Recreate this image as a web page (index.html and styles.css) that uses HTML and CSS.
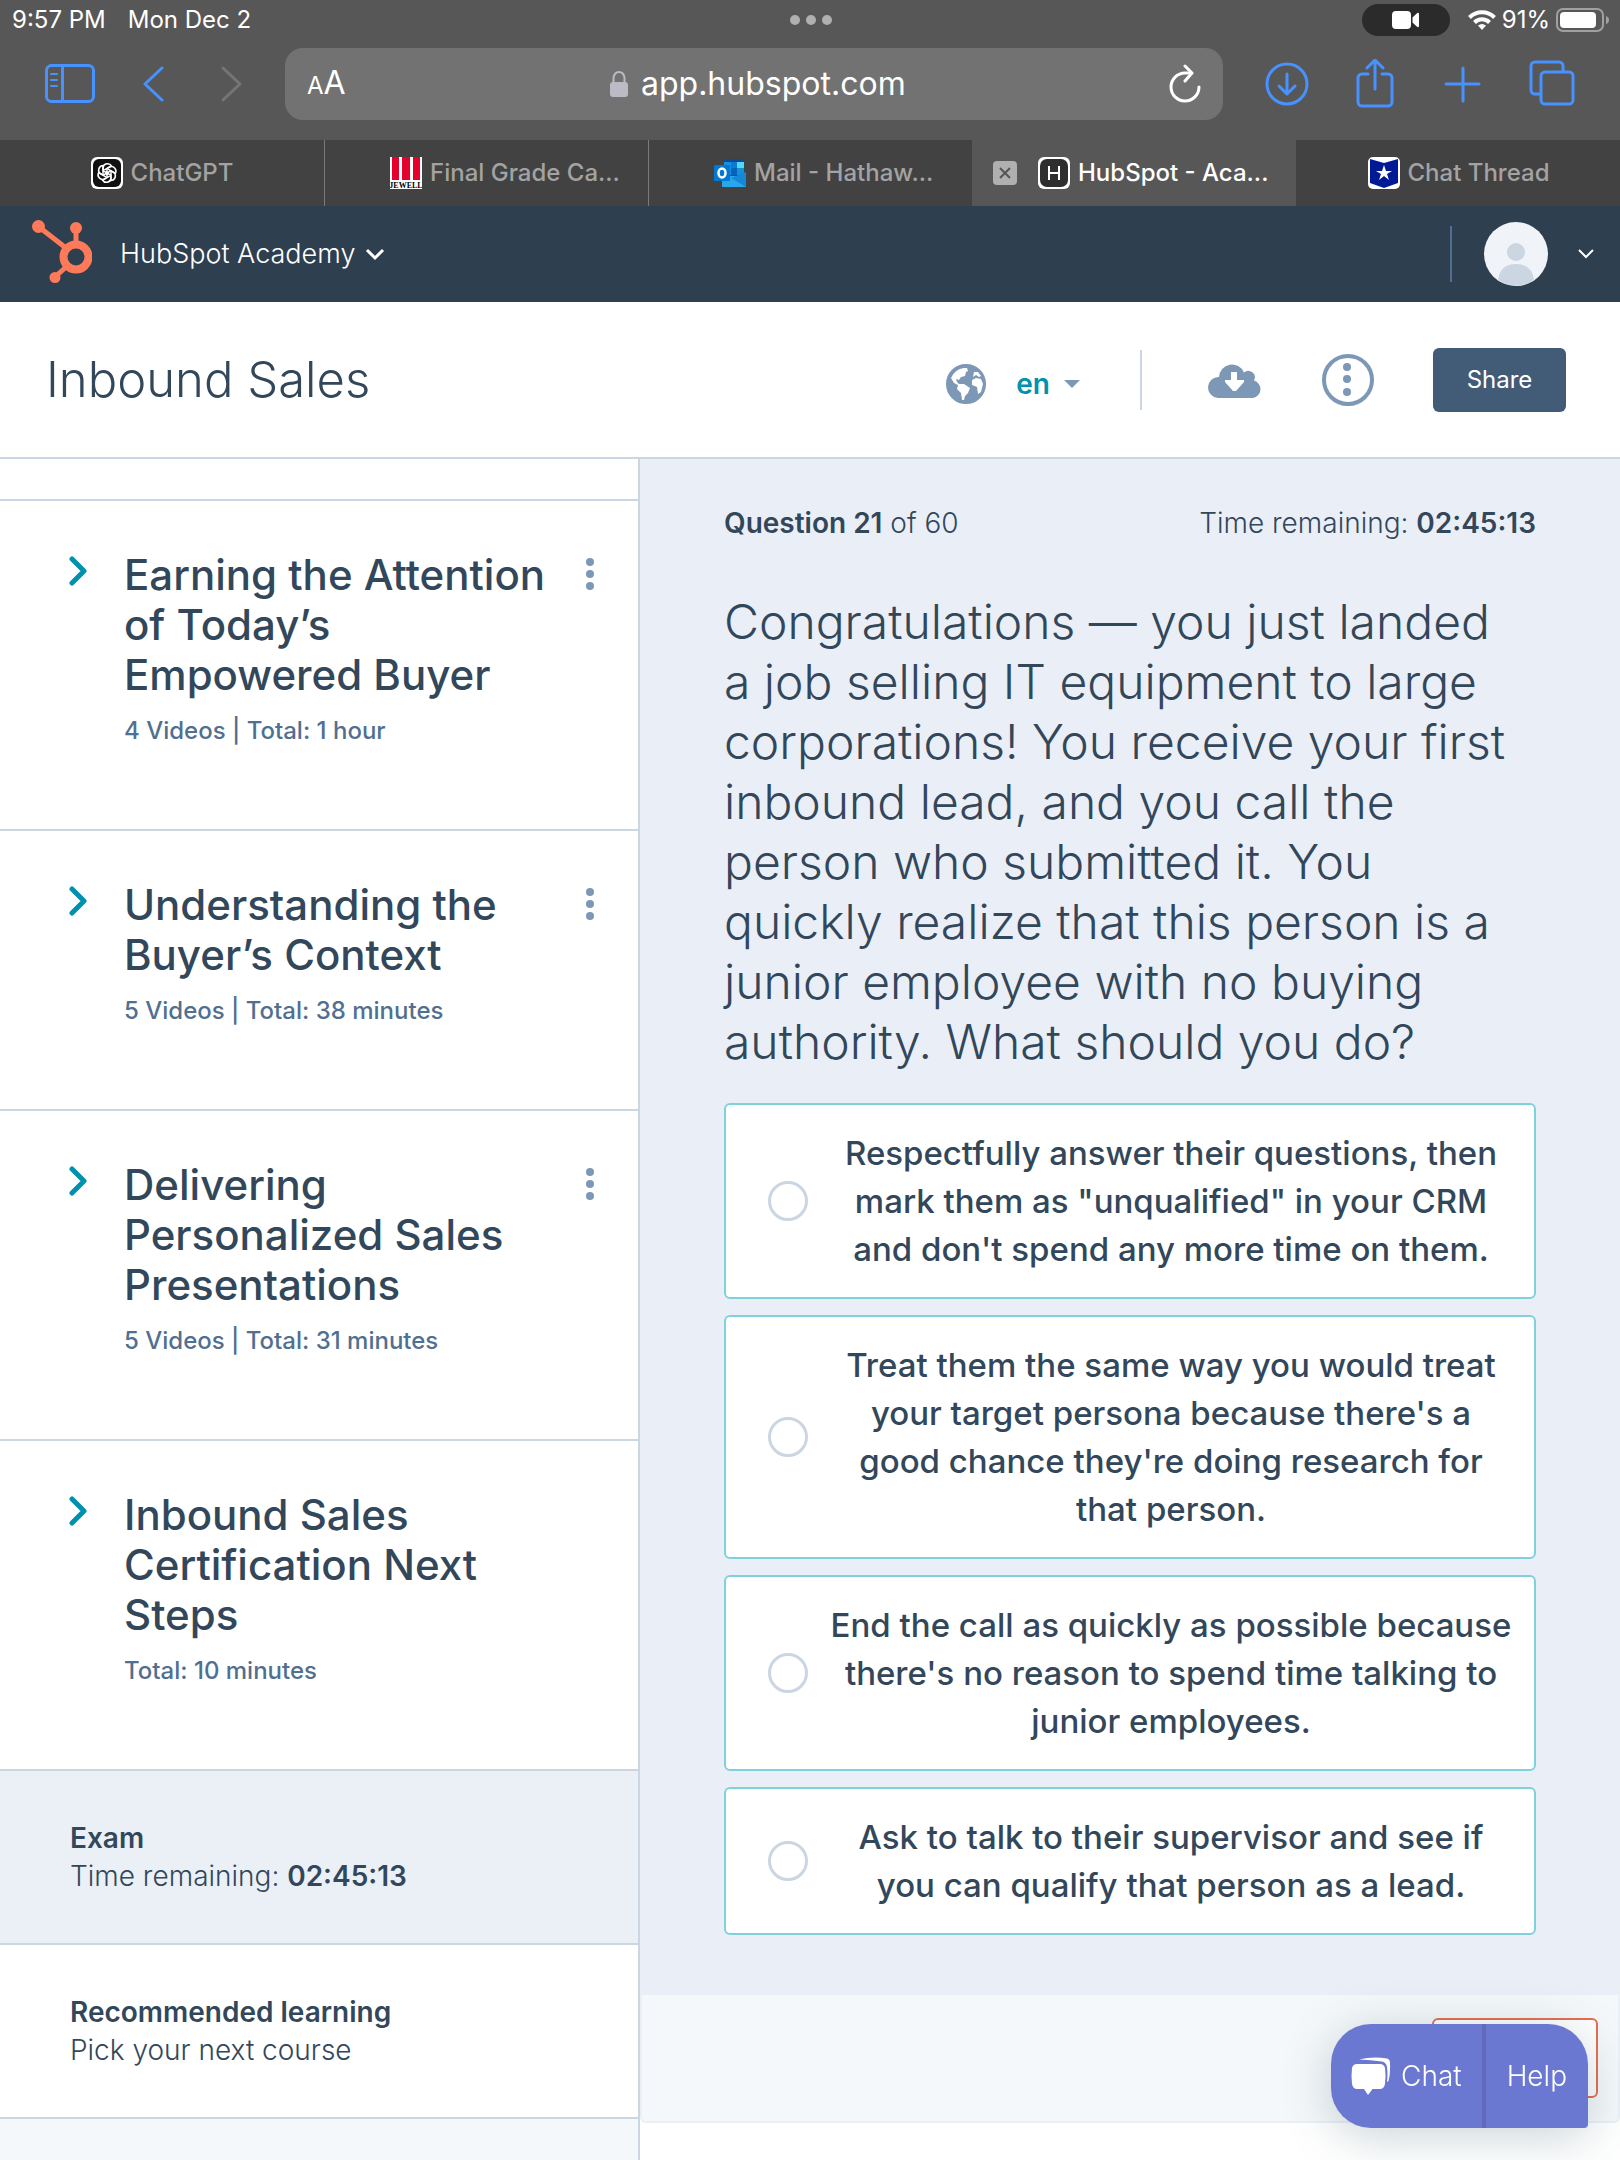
FILE: index.html
```html
<!DOCTYPE html>
<html lang="en">
<head>
    <meta charset="UTF-8">
    <meta name="viewport" content="width=device-width, initial-scale=1.0">
    <title>HubSpot - Academy</title>
    <link rel="stylesheet" href="styles.css">
</head>
<body>
    <!-- Browser chrome -->
    <div class="browser">
        <div class="status-bar">
            <div class="status-left">
                <span>9:57 PM</span>
                <span>Mon Dec 2</span>
            </div>
            <div class="status-dots"><i></i><i></i><i></i></div>
            <div class="status-right">
                <div class="camera-pill">
                    <svg width="28" height="18" viewBox="0 0 28 18" fill="#fff"><rect width="19" height="18" rx="4"/><path d="M20.500 6.500 L25 2.200 Q27 1 27 3.200 V14.800 Q27 17 25 15.800 L20.500 11.500 Z"/></svg>
                </div>
                <svg width="28" height="20" viewBox="0 0 28 20" fill="none" stroke="#fff" stroke-width="4"><path d="M1.500 7.500 A17.500 17.500 0 0 1 26.500 7.500"/><path d="M6.500 12.500 A10.500 10.500 0 0 1 21.500 12.500"/><path d="M14 20 L10 15.600 Q14 12.500 18 15.600 Z" fill="#fff" stroke="none"/></svg>
                <span class="battery-text">91%</span>
                <svg width="54" height="24" viewBox="0 0 54 24"><rect x="1" y="1" width="46" height="22" rx="6" fill="none" stroke="#a0a0a0" stroke-width="2"/><rect x="4" y="4" width="36" height="16" rx="4" fill="#fff"/><path d="M50 8 Q53 9 53 12 Q53 15 50 16 Z" fill="#a0a0a0"/></svg>
            </div>
        </div>

        <div class="toolbar">
            <div class="toolbar-nav">
                <button type="button" aria-label="Sidebar">
                    <svg width="50" height="40" viewBox="0 0 50 40" fill="none" stroke="#4792ff" stroke-width="3"><rect x="1.500" y="1.500" width="47" height="36" rx="5"/><path d="M17.500 2v36"/><path d="M6 10h6M6 16h6M6 22h6" stroke-width="2" stroke-linecap="round"/></svg>
                </button>
                <button type="button" aria-label="Back">
                    <svg width="28" height="40" viewBox="0 0 28 40" fill="none" stroke="#4792ff" stroke-width="3" stroke-linecap="round" stroke-linejoin="round"><path d="M19 4L2 20l17 16"/></svg>
                </button>
                <button type="button" aria-label="Forward">
                    <svg width="28" height="40" viewBox="0 0 28 40" fill="none" stroke="#757575" stroke-width="3" stroke-linecap="round" stroke-linejoin="round"><path d="M4 4l17 16L4 36"/></svg>
                </button>
            </div>
            <div class="address-bar">
                <button type="button" class="text-size"><small>A</small>A</button>
                <div class="address">
                    <svg width="20" height="28" viewBox="0 0 20 28"><rect x="1" y="12" width="18" height="15" rx="3" fill="#bcbac4"/><path d="M4.500 13V8a5.500 6 0 0 1 11 0v5" fill="none" stroke="#bcbac4" stroke-width="2"/></svg>
                    <span>app.hubspot.com</span>
                </div>
                <button type="button" aria-label="Reload">
                    <svg width="32" height="40" viewBox="0 0 32 40" fill="none" stroke="#fff" stroke-width="3" stroke-linecap="round" stroke-linejoin="round"><path d="M30 23a14 14 0 1 1-14-14h6"/><path d="M16 2l7 7-7 8"/></svg>
                </button>
            </div>
            <div class="toolbar-actions">
                <button type="button" aria-label="Downloads">
                    <svg width="44" height="50" viewBox="0 0 44 50" fill="none" stroke="#4792ff" stroke-width="3" stroke-linecap="round" stroke-linejoin="round"><circle cx="22" cy="25" r="20"/><path d="M22 15v20M14 27l8 8 8-8"/></svg>
                </button>
                <button type="button" aria-label="Share page">
                    <svg width="44" height="50" viewBox="0 0 44 50" fill="none" stroke="#4792ff" stroke-width="3" stroke-linecap="round" stroke-linejoin="round"><path d="M15 15H9a4 4 0 0 0-4 4v24a4 4 0 0 0 4 4h26a4 4 0 0 0 4-4V19a4 4 0 0 0-4-4h-6"/><path d="M22 30V2M14 9l8-8 8 8"/></svg>
                </button>
                <button type="button" aria-label="New tab">
                    <svg width="44" height="50" viewBox="0 0 44 50" fill="none" stroke="#4792ff" stroke-width="3" stroke-linecap="round"><path d="M22 9v33M5 25h33"/></svg>
                </button>
                <button type="button" aria-label="Show tabs">
                    <svg width="46" height="50" viewBox="0 0 46 50" fill="none" stroke="#4792ff" stroke-width="3"><rect x="12" y="13" width="32" height="32" rx="4"/><path d="M12 35H6a4 4 0 0 1-4-4V7a4 4 0 0 1 4-4h24a4 4 0 0 1 4 4v6"/></svg>
                </button>
            </div>
        </div>

        <div class="tabs">
            <div class="tab">
                <svg width="32" height="32" viewBox="0 0 32 32"><rect width="32" height="32" rx="6" fill="#fff"/><rect x="2" y="2" width="28" height="28" rx="6" fill="#111"/><g fill="none" stroke="#fff" stroke-width="1.500" transform="translate(16 16)"><path id="petal" d="M-4 1V-5.500A4.600 4.600 0 0 1 4.500-7L0-4.400V2"/><use href="#petal" transform="rotate(60)"/><use href="#petal" transform="rotate(120)"/><use href="#petal" transform="rotate(180)"/><use href="#petal" transform="rotate(240)"/><use href="#petal" transform="rotate(300)"/></g></svg>
                <span>ChatGPT</span>
            </div>
            <div class="tab tab-long">
                <svg width="32" height="32" viewBox="0 0 32 32"><rect width="32" height="32" fill="#fff"/><path d="M2 0h7v23H2zM12 0h8v23h-8zM23 0h7v23h-7z" fill="#e4002b"/><text x="16" y="31" text-anchor="middle" class="jewell">JEWELL</text></svg>
                <span>Final Grade Ca...</span>
            </div>
            <div class="tab tab-long">
                <svg width="32" height="32" viewBox="0 0 32 32"><path d="M10 2h20v16H10z" fill="#1490df"/><path d="M10 2h20v3H10z" fill="#0a4a9a"/><path d="M17 5h6v6h-6z" fill="#0f78d4"/><path d="M23 5h7v6h-7z" fill="#50d9ff"/><path d="M17 11h6v7h-6z" fill="#0364b8"/><path d="M8 19h24v11H8z" fill="#28a8ea"/><path d="M32 15v15L17 21z" fill="#1587d4"/><path d="M8 22l24 8H8z" fill="#28a8ea"/><rect y="8" width="16" height="16" rx="1" fill="#0078d4"/><ellipse cx="8" cy="16" rx="3.500" ry="4.500" fill="none" stroke="#fff" stroke-width="2.500"/></svg>
                <span>Mail - Hathaw...</span>
            </div>
            <div class="tab tab-long active">
                <button type="button" class="tab-close" aria-label="Close tab">
                    <svg width="24" height="24" viewBox="0 0 24 24"><rect width="24" height="24" rx="4" fill="#b0b0b0"/><path d="M7 7l10 10M17 7L7 17" stroke="#555" stroke-width="2"/></svg>
                </button>
                <svg width="32" height="32" viewBox="0 0 32 32"><rect width="32" height="32" rx="6" fill="#fff"/><rect x="2" y="2" width="28" height="28" rx="7" fill="#2e2e2e"/><path d="M11 9v14M21 9v14M11 16h10" stroke="#fff" stroke-width="2"/></svg>
                <span>HubSpot - Aca...</span>
            </div>
            <div class="tab">
                <svg width="32" height="32" viewBox="0 0 32 32"><rect width="32" height="32" rx="5" fill="#fff"/><path d="M2 2l14 4 14-4v24l-14 5-14-5z" fill="#001a96"/><path d="M16 8l2 6h6l-5 3 2 6-5-4-5 4 2-6-5-3h6z" fill="#fff"/></svg>
                <span>Chat Thread</span>
            </div>
        </div>
    </div>

    <!-- HubSpot top nav -->
    <nav class="navbar">
        <a href="#" class="navbar-logo" aria-label="HubSpot">
            <svg width="60" height="64" viewBox="0 0 60 64" fill="none" stroke="#ff7a59"><circle cx="44" cy="37" r="12.500" stroke-width="8"/><path d="M44 26V9M34 28L7 7M34 47L23 57" stroke-width="5"/><g fill="#ff7a59" stroke="none"><circle cx="6.500" cy="6.500" r="6.500"/><circle cx="44" cy="8" r="6"/><circle cx="23" cy="57.500" r="5.500"/></g></svg>
        </a>
        <button type="button" class="navbar-menu">HubSpot Academy
            <svg width="20" height="14" viewBox="0 0 20 14" fill="none" stroke="#fff" stroke-width="3"><path d="M2 3l8 8 8-8"/></svg>
        </button>
        <button type="button" class="account" aria-label="Account">
            <svg class="avatar" width="64" height="64" viewBox="0 0 64 64"><circle cx="32" cy="32" r="32" fill="#f0f4f8"/><circle cx="32" cy="30" r="9" fill="#cbd6e2"/><path d="M14 58Q16 42 32 42T50 58A32 32 0 0 1 14 58z" fill="#cbd6e2"/></svg>
            <svg width="16" height="10" viewBox="0 0 16 10" fill="none" stroke="#fff" stroke-width="2"><path d="M1 1l7 7 7-7"/></svg>
        </button>
    </nav>

    <header class="course-header">
        <h1>Inbound Sales</h1>
        <div class="course-tools">
            <button type="button" class="language">
                <svg width="40" height="40" viewBox="0 0 40 40"><circle cx="20" cy="20" r="19" fill="#7c98b6" stroke="#7c98b6" stroke-width="2"/><path d="M5 14Q9 5 18 4L21 4 22 7 20 8 19 12 15 13 13 16 10 15 11 18 13 20 18 20 24 24 22 29 19 32 18 36 16 36 15 29 11 25 12 21 8 19zM28 8L32 8 35 12 33 13 30 11 27 13zM26 16L30 14 35 15 37 20 35 28 32 30 31 23 26 21z" fill="#fff"/></svg>
                <span>en</span>
                <svg width="16" height="8" viewBox="0 0 16 8"><path d="M0 0h16L8 8z" fill="#7c98b6"/></svg>
            </button>
            <div class="tool-icons">
                <button type="button" aria-label="Download">
                    <svg width="56" height="38" viewBox="0 0 56 38"><path d="M11 37A10.500 10.500 0 0 1 12 16A13 13 0 0 1 37 11.500A6.500 6.500 0 0 1 47 19.500A9 9 0 0 1 46 37z" fill="#7c98b6"/><path d="M24 11h6v8h7v2l-8 9h-3l-8-9v-2h6z" fill="#fff"/></svg>
                </button>
                <button type="button" aria-label="More options">
                    <svg width="52" height="52" viewBox="0 0 52 52" fill="#7c98b6"><circle cx="26" cy="26" r="24" fill="none" stroke="#7c98b6" stroke-width="4"/><circle cx="25" cy="13" r="4"/><circle cx="25" cy="25" r="4"/><circle cx="25" cy="38" r="4"/></svg>
                </button>
                <button type="button" class="share-btn">Share</button>
            </div>
        </div>
    </header>

    <div class="layout">
        <aside class="sidebar">
            <div class="sidebar-gap"></div>
            <section class="lesson">
                <button type="button" class="expand" aria-label="Expand lesson">
                    <svg width="18" height="32" viewBox="0 0 18 32" fill="none" stroke="#0091ae" stroke-width="5" stroke-linecap="round" stroke-linejoin="round"><path d="M3 4l12 12L3 28"/></svg>
                </button>
                <div class="lesson-text">
                    <h2>Earning the Attention of Today’s Empowered Buyer</h2>
                    <p>4 Videos | Total: 1 hour</p>
                </div>
                <button type="button" class="more" aria-label="Lesson options">
                    <svg width="10" height="34" viewBox="0 0 10 34" fill="#7c98b6"><circle cx="5" cy="5" r="4"/><circle cx="5" cy="17" r="4"/><circle cx="5" cy="29" r="4"/></svg>
                </button>
            </section>
            <section class="lesson">
                <button type="button" class="expand" aria-label="Expand lesson">
                    <svg width="18" height="32" viewBox="0 0 18 32" fill="none" stroke="#0091ae" stroke-width="5" stroke-linecap="round" stroke-linejoin="round"><path d="M3 4l12 12L3 28"/></svg>
                </button>
                <div class="lesson-text">
                    <h2>Understanding the Buyer’s Context</h2>
                    <p>5 Videos | Total: 38 minutes</p>
                </div>
                <button type="button" class="more" aria-label="Lesson options">
                    <svg width="10" height="34" viewBox="0 0 10 34" fill="#7c98b6"><circle cx="5" cy="5" r="4"/><circle cx="5" cy="17" r="4"/><circle cx="5" cy="29" r="4"/></svg>
                </button>
            </section>
            <section class="lesson">
                <button type="button" class="expand" aria-label="Expand lesson">
                    <svg width="18" height="32" viewBox="0 0 18 32" fill="none" stroke="#0091ae" stroke-width="5" stroke-linecap="round" stroke-linejoin="round"><path d="M3 4l12 12L3 28"/></svg>
                </button>
                <div class="lesson-text">
                    <h2>Delivering Personalized Sales Presentations</h2>
                    <p>5 Videos | Total: 31 minutes</p>
                </div>
                <button type="button" class="more" aria-label="Lesson options">
                    <svg width="10" height="34" viewBox="0 0 10 34" fill="#7c98b6"><circle cx="5" cy="5" r="4"/><circle cx="5" cy="17" r="4"/><circle cx="5" cy="29" r="4"/></svg>
                </button>
            </section>
            <section class="lesson">
                <button type="button" class="expand" aria-label="Expand lesson">
                    <svg width="18" height="32" viewBox="0 0 18 32" fill="none" stroke="#0091ae" stroke-width="5" stroke-linecap="round" stroke-linejoin="round"><path d="M3 4l12 12L3 28"/></svg>
                </button>
                <div class="lesson-text">
                    <h2>Inbound Sales Certification Next Steps</h2>
                    <p>Total: 10 minutes</p>
                </div>
            </section>
            <a href="#" class="side-item selected">
                <strong>Exam</strong>
                <span>Time remaining: <b>02:45:13</b></span>
            </a>
            <a href="#" class="side-item">
                <strong>Recommended learning</strong>
                <span>Pick your next course</span>
            </a>
        </aside>

        <main class="exam">
            <form class="question">
                <div class="question-info">
                    <span><strong>Question 21</strong> of 60</span>
                    <span>Time remaining: <b>02:45:13</b></span>
                </div>
                <h2 id="question-text">Congratulations — you just landed a job selling IT equipment to large corporations! You receive your first inbound lead, and you call the person who submitted it. You quickly realize that this person is a junior employee with no buying authority. What should you do?</h2>
                <div class="options" role="radiogroup" aria-labelledby="question-text">
                    <label class="option">
                        <input type="radio" name="answer" value="1">
                        <span>Respectfully answer their questions, then mark them as "unqualified" in your CRM and don't spend any more time on them.</span>
                    </label>
                    <label class="option">
                        <input type="radio" name="answer" value="2">
                        <span>Treat them the same way you would treat your target persona because there's a good chance they're doing research for that person.</span>
                    </label>
                    <label class="option">
                        <input type="radio" name="answer" value="3">
                        <span>End the call as quickly as possible because there's no reason to spend time talking to junior employees.</span>
                    </label>
                    <label class="option">
                        <input type="radio" name="answer" value="4">
                        <span>Ask to talk to their supervisor and see if you can qualify that person as a lead.</span>
                    </label>
                </div>
            </form>
            <div class="exam-footer">
                <button type="button" class="next-btn" aria-label="Next"></button>
            </div>
        </main>
    </div>

    <!-- Floating chat / help widget -->
    <div class="help-widget">
        <button type="button" class="chat-btn">
            <svg width="40" height="38" viewBox="0 0 40 38" fill="#fff"><path d="M6 7H29Q33 7 34 11Q35 18 34 27Q33 32 29 32H21.500L17 38L13 32H6Q2 32 1 27Q0 19 1 11Q2 7 6 7z"/><path d="M8 2.500Q22-1 36 1.500Q39 2 39 6Q39.500 17 37.500 24L36 25Q37 17 36 10Q35 5 31 4.500Q20 3 8 2.500z"/></svg>
            Chat
        </button>
        <button type="button" class="help-btn">Help</button>
    </div>
</body>
</html>
```
FILE: styles.css
```css
* {
    margin: 0;
    padding: 0;
    box-sizing: border-box;
}

body {
    font-family: Inter, "Open Sans", sans-serif;
    font-size: 28px;
    font-weight: 300;
    line-height: 38px;
    color: #33475b;
    background-color: #fff;
    min-height: 100vh;
    display: flex;
    flex-direction: column;
}

button {
    font: inherit;
    color: inherit;
    background: none;
    border: none;
    cursor: pointer;
}

svg {
    display: block;
    flex-shrink: 0;
}

a {
    color: inherit;
    text-decoration: none;
}

strong,
b {
    font-weight: 600;
}

/* Browser chrome */
.browser {
    background-color: #575757;
    color: #fff;
    font-weight: 400;
}

.status-bar {
    height: 40px;
    padding: 0 10px 0 12px;
    display: grid;
    grid-template-columns: 1fr auto 1fr;
    align-items: center;
    font-size: 24px;
}

.status-left {
    display: flex;
    gap: 22px;
}

.status-dots {
    display: flex;
    gap: 6px;
}

.status-dots i {
    width: 10px;
    height: 10px;
    border-radius: 50%;
    background-color: #b0b0b0;
}

.status-right {
    display: flex;
    align-items: center;
    justify-content: flex-end;
    gap: 6px;
}

.camera-pill {
    width: 88px;
    height: 32px;
    margin-right: 12px;
    border-radius: 16px;
    background-color: #2b2b2b;
    display: flex;
    align-items: center;
    justify-content: center;
}

.toolbar {
    height: 100px;
    padding: 8px 45px 20px;
    display: flex;
    align-items: center;
}

.toolbar-nav {
    display: flex;
    gap: 48px;
    margin-right: 38px;
}

.toolbar-actions {
    display: flex;
    gap: 44px;
    margin-left: 42px;
}

.address-bar {
    flex: 1;
    height: 72px;
    padding: 0 22px;
    border-radius: 18px;
    background-color: #727272;
    display: flex;
    align-items: center;
    justify-content: space-between;
}

.text-size {
    font-size: 32px;
}

.text-size small {
    font-size: 24px;
}

.address {
    display: flex;
    align-items: center;
    gap: 12px;
    font-size: 32px;
}

.tabs {
    height: 66px;
    display: grid;
    grid-template-columns: repeat(5, 1fr);
    background-color: #424242;
    color: #a3a3a3;
    font-size: 24px;
    font-weight: 500;
}

.tab {
    display: flex;
    align-items: center;
    justify-content: center;
    gap: 8px;
    white-space: nowrap;
    position: relative;
}

.tab + .tab {
    border-left: 1px solid #7a7a7a;
}

.tab-long {
    justify-content: flex-start;
    padding-left: 65px;
}

.tab.active,
.tab.active + .tab {
    border-left-color: transparent;
}

.tab.active {
    background-color: #575757;
    color: #fff;
}

.tab-close {
    position: absolute;
    left: 20px;
}

.jewell {
    font-family: "Liberation Serif", serif;
    font-size: 8px;
    font-weight: 700;
}

/* HubSpot nav */
.navbar {
    height: 96px;
    padding: 0 26px 0 32px;
    display: flex;
    align-items: center;
    background-color: #2e3f50;
    color: #fff;
}

.navbar-logo {
    padding-bottom: 4px;
}

.navbar-menu {
    display: flex;
    align-items: center;
    gap: 10px;
    margin-left: 28px;
    font-size: 27px;
}

.account {
    display: flex;
    align-items: center;
    gap: 30px;
    height: 56px;
    margin-left: auto;
    padding-left: 32px;
    border-left: 2px solid #516f90;
}

/* Course title bar */
.course-header {
    height: 157px;
    padding: 0 54px 0 46px;
    display: flex;
    align-items: center;
    justify-content: space-between;
    border-bottom: 2px solid #cbd6e2;
}

h1 {
    font-size: 49px;
    font-weight: 300;
    line-height: 60px;
}

.course-tools {
    display: flex;
    align-items: center;
}

.language {
    display: flex;
    align-items: center;
    height: 60px;
    padding: 8px 60px 0 0;
    border-right: 2px solid #cbd6e2;
    color: #0091ae;
    font-weight: 600;
}

.language span {
    margin: 0 14px 0 30px;
}

.tool-icons {
    display: flex;
    align-items: center;
    gap: 59px;
    margin-left: 65px;
}

.share-btn {
    width: 133px;
    height: 64px;
    border-radius: 6px;
    background-color: #425b76;
    color: #fff;
    font-size: 24px;
    font-weight: 400;
}

/* Two columns */
.layout {
    flex: 1;
    display: flex;
}

.sidebar {
    width: 640px;
    flex-shrink: 0;
    border-right: 2px solid #cbd6e2;
    background-color: #f5f8fa;
}

.sidebar-gap {
    height: 42px;
    background-color: #fff;
    border-bottom: 2px solid #cbd6e2;
}

.lesson {
    display: flex;
    align-items: flex-start;
    padding: 49px 43px 84px 69px;
    background-color: #fff;
    border-bottom: 2px solid #cbd6e2;
}

.expand {
    padding-top: 5px;
}

.more {
    padding-top: 7px;
}

.lesson-text {
    flex: 1;
    margin-left: 37px;
    padding-right: 36px;
}

.lesson h2 {
    font-size: 42px;
    font-weight: 500;
    line-height: 50px;
}

.lesson p {
    margin-top: 17px;
    font-size: 24px;
    font-weight: 500;
    line-height: 28px;
    color: #516f90;
}

.side-item {
    display: flex;
    flex-direction: column;
    padding: 48px 70px;
    background-color: #fff;
    border-bottom: 2px solid #cbd6e2;
}

.side-item.selected {
    background-color: #eaf0f6;
}

.exam {
    flex: 1;
}

.question {
    padding: 45px 84px 60px;
    background-color: #eaeff7;
}

.question-info {
    display: flex;
    justify-content: space-between;
}

.question h2 {
    margin: 50px 0 31px;
    padding-right: 20px;
    font-size: 48px;
    font-weight: 300;
    line-height: 60px;
}

.options {
    display: flex;
    flex-direction: column;
    gap: 16px;
}

.option {
    display: flex;
    align-items: center;
    gap: 22px;
    padding: 24px 22px 24px 42px;
    background-color: #fff;
    border: 2px solid #7fd1de;
    border-radius: 6px;
    font-size: 33px;
    font-weight: 500;
    line-height: 48px;
    text-align: center;
}

.option span {
    flex: 1;
}

.option input {
    appearance: none;
    width: 40px;
    height: 40px;
    border: 3px solid #cbd6e2;
    border-radius: 50%;
    background-color: #fff;
}

.option input:checked {
    border: 12px solid #0091ae;
}

.exam-footer {
    height: 128px;
    padding: 23px 20px;
    display: flex;
    justify-content: flex-end;
    border: 2px solid #eaf0f6;
    border-top: none;
    border-radius: 0 0 6px 6px;
    background-color: #f5f8fa;
}

.next-btn {
    width: 166px;
    height: 80px;
    border: 2px solid #e66e50;
    border-radius: 6px;
    background-color: #fff;
}

/* Chat widget */
.help-widget {
    position: fixed;
    right: 32px;
    bottom: 32px;
    display: flex;
    height: 104px;
    border-radius: 40px 40px 4px 40px;
    background-color: #6a78d1;
    color: #fff;
    box-shadow: 0 8px 48px rgba(45, 80, 90, 0.25);
}

.chat-btn {
    display: flex;
    align-items: center;
    gap: 10px;
    padding: 0 20px;
    border-right: 4px solid #616bb9;
}

.help-btn {
    padding: 0 21px;
}
```
